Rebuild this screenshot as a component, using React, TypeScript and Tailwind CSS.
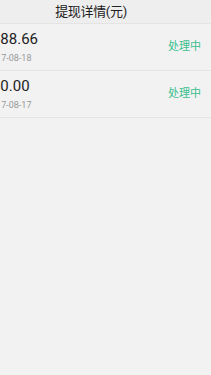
import React from 'react';

interface Record {
  id: string;
  amount: string;
  date: string;
  status: string;
}

export default function App() {
  const records: Record[] = [
    { id: '1', amount: '¥188.66', date: '2017-08-18', status: '处理中' },
    { id: '2', amount: '¥10.00', date: '2017-08-17', status: '处理中' },
  ];

  return (
    <div className="w-[211px] h-[375px] overflow-hidden bg-[#f2f2f2]">
      <div
        className="w-[240px] -ml-[29px]"
        style={{ fontFamily: 'Roboto, "Noto Sans CJK SC", sans-serif' }}
      >
        {/* ヘッダー */}
        <div className="h-[24px] flex items-center justify-center bg-[#eeeeee] border-b border-[#e4e4e4]">
          <span className="text-[13px] text-[#222] tracking-tight">提现详情(元)</span>
        </div>

        {/* 一覧 */}
        <div>
          {records.map(r => (
            <div
              key={r.id}
              className="h-[47px] flex items-center justify-between pl-[15px] pr-[10px] border-b border-[#e4e4e4]"
            >
              <div className="flex flex-col">
                <span className="text-[15px] leading-[18px] text-[#222] -ml-[2px]">{r.amount}</span>
                <span className="text-[9px] leading-[12px] mt-[4px] text-[#999]">{r.date}</span>
              </div>
              <span className="text-[11px] text-[#3cbf8f]">{r.status}</span>
            </div>
          ))}
        </div>
      </div>
    </div>
  );
}
